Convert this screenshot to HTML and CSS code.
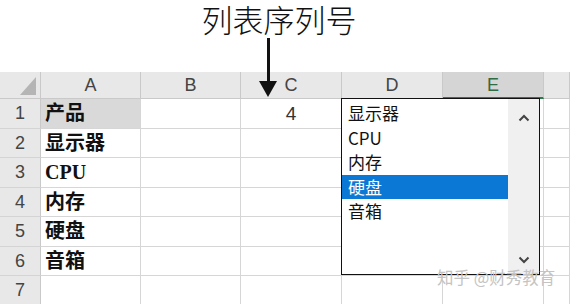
FILE: index.html
```html
<!DOCTYPE html>
<html lang="zh-CN">
<head>
    <meta charset="UTF-8">
    <title>列表序列号</title>
    <link rel="stylesheet" href="styles.css">
</head>
<body>

<div class="tittel">列表序列号</div>

<!--PIL SOM PEKER NED PA KOLONNE C-->
<div class="pil">
    <div class="pil-strek"></div>
    <div class="pil-hode"></div>
</div>

<div class="ark">
    <div class="hjorne"><div class="trekant"></div></div>
    <div class="kolhode">A</div>
    <div class="kolhode">B</div>
    <div class="kolhode">C</div>
    <div class="kolhode">D</div>
    <div class="kolhode valgt">E</div>
    <div class="kolhode"></div>

    <div class="radnr">1</div>
    <div class="celle tekst markert">产品</div>
    <div class="celle"></div>
    <div class="celle tall">4</div>
    <div class="celle"></div>
    <div class="celle"></div>
    <div class="celle"></div>

    <div class="radnr">2</div>
    <div class="celle tekst">显示器</div>
    <div class="celle"></div>
    <div class="celle"></div>
    <div class="celle"></div>
    <div class="celle"></div>
    <div class="celle"></div>

    <div class="radnr">3</div>
    <div class="celle tekst">CPU</div>
    <div class="celle"></div>
    <div class="celle"></div>
    <div class="celle"></div>
    <div class="celle"></div>
    <div class="celle"></div>

    <div class="radnr">4</div>
    <div class="celle tekst">内存</div>
    <div class="celle"></div>
    <div class="celle"></div>
    <div class="celle"></div>
    <div class="celle"></div>
    <div class="celle"></div>

    <div class="radnr">5</div>
    <div class="celle tekst">硬盘</div>
    <div class="celle"></div>
    <div class="celle"></div>
    <div class="celle"></div>
    <div class="celle"></div>
    <div class="celle"></div>

    <div class="radnr">6</div>
    <div class="celle tekst">音箱</div>
    <div class="celle"></div>
    <div class="celle"></div>
    <div class="celle"></div>
    <div class="celle"></div>
    <div class="celle"></div>

    <div class="radnr">7</div>
    <div class="celle"></div>
    <div class="celle"></div>
    <div class="celle"></div>
    <div class="celle"></div>
    <div class="celle"></div>
    <div class="celle"></div>
</div>

<!--LISTEBOKSEN OVER D OG E-->
<div class="liste">
    <div class="valg">
        <div class="element">显示器</div>
        <div class="element">CPU</div>
        <div class="element">内存</div>
        <div class="element aktiv">硬盘</div>
        <div class="element">音箱</div>
    </div>
    <div class="rullefelt">
        <svg width="12" height="8" viewBox="0 0 12 8"><path d="M1.5 6.5 L6 2 L10.5 6.5" fill="none" stroke="#444" stroke-width="2"/></svg>
        <svg width="12" height="8" viewBox="0 0 12 8"><path d="M1.5 1.5 L6 6 L10.5 1.5" fill="none" stroke="#444" stroke-width="2"/></svg>
    </div>
</div>

<div class="vannmerke">知乎 @财秀教育</div>

</body>
</html>
```

FILE: styles.css
```css
body {
    margin: 0;
    background-color: white;
    overflow: hidden;
    font-family: "Liberation Sans", "Noto Sans CJK SC", sans-serif;
}
/*OVERSKRIFT OG PIL*/
.tittel {
    height: 70px;
    padding: 2px 12px 0 0;
    text-align: center;
    font-family: "Noto Sans CJK SC", sans-serif;
    font-weight: 300;
    font-size: 31px;
    line-height: 33px;
    color: #111;
}
.pil {
    position: absolute;
    left: 259px;
    top: 38px;
    width: 18px;
    display: flex;
    flex-direction: column;
    align-items: center;
    z-index: 2;
}
.pil-strek {
    width: 3px;
    height: 43px;
    background-color: #111;
}
.pil-hode {
    width: 0;
    height: 0;
    border-left: 9px solid transparent;
    border-right: 9px solid transparent;
    border-top: 16px solid #111;
}
/*REGNEARKET*/
.ark {
    display: grid;
    grid-template-columns: 41px 100px 100px 101px 101px 101px 1fr;
    grid-template-rows: 27px repeat(7, 29.5px);
}
.hjorne {
    background-color: #e8e8e8;
    border-right: 1px solid #c9c9c9;
    border-bottom: 1px solid #c9c9c9;
    display: flex;
    align-items: flex-end;
    justify-content: flex-end;
    padding: 0 4px 3px 0;
}
.trekant {
    width: 0;
    height: 0;
    border-left: 16px solid transparent;
    border-bottom: 18px solid #b5b5b5;
}
.kolhode {
    background-color: #e8e8e8;
    border-right: 1px solid #c9c9c9;
    border-bottom: 1px solid #c9c9c9;
    text-align: center;
    font-size: 18px;
    line-height: 27px;
    color: #444;
}
.kolhode.valgt {
    background-color: #d5d5d5;
    border-bottom: 2px solid #2a7a4b;
    color: #2f6b45;
}
.radnr {
    background-color: #e8e8e8;
    border-right: 1px solid #c9c9c9;
    border-bottom: 1px solid #d4d4d4;
    text-align: center;
    font-size: 18px;
    line-height: 29px;
    color: #444;
}
.celle {
    border-right: 1px solid #d6d6d6;
    border-bottom: 1px solid #d6d6d6;
}
.tekst {
    padding-left: 4px;
    font-family: "Liberation Serif", "Noto Sans CJK SC", serif;
    font-weight: bold;
    font-size: 20px;
    line-height: 29px;
    color: #111;
}
.markert {
    background-color: #d9d9d9;
}
.tall {
    text-align: center;
    font-size: 19px;
    line-height: 29px;
    color: #333;
}
/*LISTEBOKS*/
.liste {
    position: absolute;
    left: 341px;
    top: 98px;
    width: 197px;
    height: 175px;
    border: 1.5px solid #111;
    background-color: white;
    display: flex;
}
.valg {
    flex: 1;
    padding-top: 2px;
}
.element {
    height: 24.5px;
    padding-left: 6px;
    font-family: "Noto Sans CJK SC", sans-serif;
    font-size: 17px;
    line-height: 24px;
    color: #111;
}
.element.aktiv {
    background-color: #0a78d4;
    color: white;
}
.rullefelt {
    width: 31px;
    background-color: #f0f0f0;
    display: flex;
    flex-direction: column;
    justify-content: space-between;
    align-items: center;
    padding: 15px 0 10px;
}
.vannmerke {
    position: absolute;
    left: 437px;
    top: 265px;
    font-family: "Noto Sans CJK SC", sans-serif;
    font-size: 16.5px;
    color: #c4c4c4;
}
```
